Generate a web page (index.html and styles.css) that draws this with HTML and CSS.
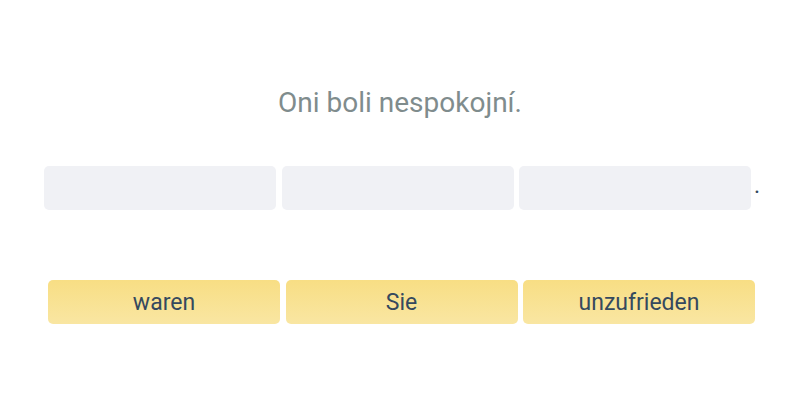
FILE: index.html
```html
<!DOCTYPE html>
<html lang="de">

<head>
    <meta charset="UTF-8">
    <meta name="viewport" content="width=device-width, initial-scale=1.0">
    <title>Translate</title>
    <link rel="stylesheet" href="styles.css">
</head>

<body>
    <main class="exercise">
        <p class="prompt">Oni boli nespokojní.</p>

        <div class="answer-row">
            <div class="slots">
                <div class="slot"></div>
                <div class="slot"></div>
                <div class="slot"></div>
            </div>
            <span class="punct">.</span>
        </div>

        <div class="word-bank">
            <button class="word">waren</button>
            <button class="word">Sie</button>
            <button class="word">unzufrieden</button>
        </div>
    </main>
</body>

</html>
```

FILE: styles.css
```css
:root {
    --text-muted: #7f8c8d;
    --text-dark: #35495e;
    --slot-bg: #f0f1f5;
    --word-top: #f8de84;
    --word-bottom: #f9e6a2;
}

body {
    margin: 0;
    font-family: Roboto, "Liberation Sans", sans-serif;
    background-color: #ffffff;
}

.exercise {
    width: 800px;
    height: 400px;
    padding-top: 88px;
    box-sizing: border-box;
}

.prompt {
    margin: 0;
    text-align: center;
    font-size: 28px;
    line-height: 30px;
    color: var(--text-muted);
}

.answer-row {
    display: flex;
    align-items: center;
    margin-top: 48px;
    padding-left: 44px;
}

.slots {
    display: flex;
    gap: 5.5px;
}

.slot {
    width: 232px;
    height: 44px;
    border-radius: 5px;
    background-color: var(--slot-bg);
}

.punct {
    margin-left: 3px;
    margin-bottom: 6px;
    font-size: 23px;
    color: var(--text-dark);
}

.word-bank {
    display: flex;
    gap: 5.5px;
    margin-top: 70px;
    padding-left: 48px;
}

.word {
    width: 232px;
    height: 44px;
    padding: 0;
    border: none;
    border-radius: 5px;
    background: linear-gradient(to bottom, var(--word-top), var(--word-bottom));
    font-family: inherit;
    font-size: 23px;
    color: var(--text-dark);
}
```
